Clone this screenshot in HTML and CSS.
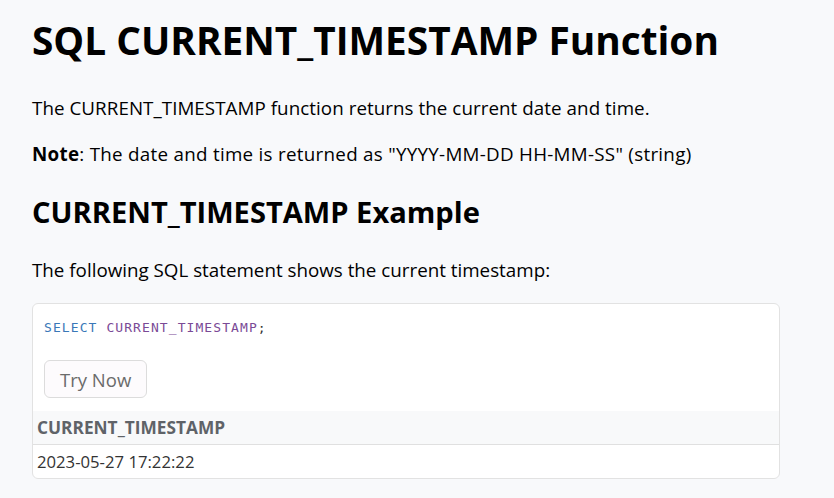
FILE: index.html
```html
<!DOCTYPE html>
<html lang="en">
<head>
<meta charset="utf-8">
<title>SQL CURRENT_TIMESTAMP Function</title>
<link rel="stylesheet" href="styles.css">
</head>
<body>
<main class="page">
  <h1 class="title">SQL CURRENT_TIMESTAMP Function</h1>
  <p class="text p1">The CURRENT_TIMESTAMP function returns the current date and time.</p>
  <p class="text p2"><strong>Note</strong>: The date and time is returned as "YYYY-MM-DD HH-MM-SS" (string)</p>
  <h2 class="subtitle">CURRENT_TIMESTAMP Example</h2>
  <p class="text p3">The following SQL statement shows the current timestamp:</p>
  <section class="example">
    <div class="code"><span class="kw">SELECT</span> <span class="fn">CURRENT_TIMESTAMP</span><span class="punct">;</span></div>
    <div class="actions"><button class="try">Try Now</button></div>
    <table class="result">
      <thead><tr><th>CURRENT_TIMESTAMP</th></tr></thead>
      <tbody><tr><td>2023-05-27 17:22:22</td></tr></tbody>
    </table>
  </section>
</main>
</body>
</html>
```
FILE: styles.css
```css
html, body {
  margin: 0;
  padding: 0;
  background: #f8f9fb;
}
.page {
  padding: 14px 54px 0 32px;
  font-family: "Open Sans", "Noto Sans", sans-serif;
  color: #000;
}
.title {
  margin: 0;
  font-size: 38.8px;
  line-height: 52px;
  font-weight: 700;
}
.text {
  margin: 0;
  font-size: 18.8px;
  line-height: 28px;
}
.p1 { padding-top: 28px; letter-spacing: 0.05px; }
.p2 { padding-top: 18px; letter-spacing: 0.28px; }
.p3 { padding-top: 24px; }
.subtitle {
  margin: 0;
  padding-top: 24px;
  font-size: 29.1px;
  line-height: 40px;
  font-weight: 700;
}
.example {
  margin-top: 19px;
  background: #fff;
  border: 1px solid #e2e2e2;
  border-radius: 6px;
  overflow: hidden;
}
.code {
  padding: 14px 11px 0 11px;
  font-family: "DejaVu Sans Mono", "Liberation Mono", monospace;
  font-size: 13px;
  line-height: 20px;
  letter-spacing: 1.08px;
  color: #333;
}
.kw { color: #3a78b8; }
.fn { color: #7a4a96; }
.punct { color: #333; }
.actions {
  padding: 22px 11px 13px 11px;
}
.try {
  display: block;
  height: 38px;
  padding: 0 15px;
  background: #fdfbfd;
  border: 1px solid #dcdcdc;
  border-radius: 6px;
  font-family: "Open Sans", "Noto Sans", sans-serif;
  font-size: 18.5px;
  color: #6b6b6b;
}
.result {
  width: 100%;
  border-collapse: collapse;
  font-family: "Open Sans", "Noto Sans", sans-serif;
  color: #333;
}
.result th {
  text-align: left;
  background: #f8f9fa;
  color: #5f6368;
  font-weight: 700;
  font-size: 17.3px;
  height: 33px;
  padding: 0 4px;
  border-bottom: 1px solid #e0e0e0;
}
.result td {
  height: 33px;
  padding: 0 4px;
  font-size: 16.7px;
}
```
